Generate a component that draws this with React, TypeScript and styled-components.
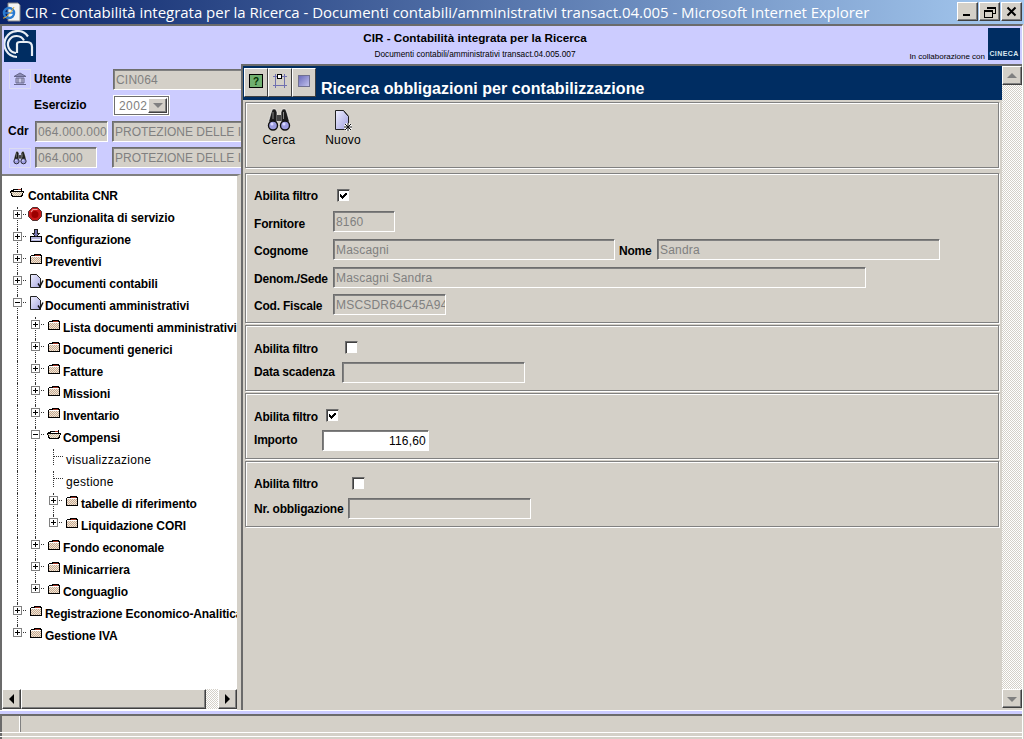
import React from "react";
import styled, { createGlobalStyle, css } from "styled-components";

const GlobalStyle = createGlobalStyle`
  html, body {
    margin: 0;
    padding: 0;
    background: #d4d0c8;
  }
  * {
    box-sizing: border-box;
  }
  body {
    font-family: "Liberation Sans", Arial, sans-serif;
    font-size: 12px;
    color: #000;
    overflow: hidden;
  }
`;

const raised = css`
  border-top: 1px solid #fff;
  border-left: 1px solid #fff;
  border-right: 1px solid #404040;
  border-bottom: 1px solid #404040;
  box-shadow: inset -1px -1px 0 #808080;
`;

const Frame = styled.div`
  width: 1024px;
  height: 739px;
  display: flex;
  flex-direction: column;
  background: #d4d0c8;
`;

const TitleBar = styled.div`
  height: 24px;
  flex: none;
  display: flex;
  align-items: center;
  padding: 0 2px 1px 2px;
  background: linear-gradient(90deg, #0a246a 0%, #a6caf0 100%);
`;

const TitleText = styled.div`
  margin-left: 4px;
  flex: 1;
  font-family: "Open Sans", sans-serif;
  font-size: 15px;
  letter-spacing: -0.03px;
  color: #fff;
  white-space: nowrap;
`;

const WinButton = styled.div`
  width: 21px;
  height: 19px;
  margin-left: 1px;
  display: flex;
  align-items: center;
  justify-content: center;
  background: #d4d0c8;
  ${raised}
`;

const Workspace = styled.div`
  flex: 1;
  display: flex;
  flex-direction: column;
  min-height: 0;
  border-top: 2px solid #6b6b6b;
  border-left: 2px solid #6b6b6b;
  margin-right: 1px;
  border-right: 1px solid #fff;
`;

const Banner = styled.div`
  height: 38px;
  flex: none;
  display: grid;
  grid-template-columns: 123px 700px 1fr;
  background: #ccccff;
`;

const BannerCenter = styled.div`
  text-align: center;
  padding-top: 4px;
`;

const BannerTitle = styled.div`
  font-size: 11.7px;
  font-weight: bold;
  line-height: 15px;
`;

const BannerSub = styled.div`
  font-size: 8.3px;
  line-height: 12px;
  margin-top: 3px;
`;

const BannerLogos = styled.div`
  display: flex;
  align-items: flex-start;
  justify-content: flex-end;
  gap: 3px;
  padding: 2px 2px 0 0;
  font-size: 8px;
  line-height: 10px;
  white-space: nowrap;
`;

const CollabText = styled.span`
  margin-top: 24px;
`;

const Columns = styled.div`
  flex: 1;
  min-height: 0;
  display: flex;
`;

const LeftColumn = styled.div`
  width: 239px;
  flex: none;
  display: flex;
  flex-direction: column;
  background: #ccccff;
  margin-top: -38px;
  position: relative;
`;

const LogoWrap = styled.div`
  height: 40px;
  padding: 4px 0 0 2px;
  flex: none;
`;

const UserPanel = styled.div`
  height: 108px;
  flex: none;
  overflow: hidden;
  display: flex;
  flex-direction: column;
`;

const UserRow = styled.div<{ $h: number }>`
  height: ${(p) => p.$h}px;
  display: flex;
  align-items: center;
  white-space: nowrap;
`;

const SmallIconBox = styled.div<{ $ml: number }>`
  width: 22px;
  height: 20px;
  margin-left: ${(p) => p.$ml}px;
  display: flex;
  align-items: center;
  justify-content: center;
  border: 1px solid #dcdcf0;
  flex: none;
`;

const BoldLabel = styled.div<{ $w?: number; $ml?: number }>`
  font-weight: bold;
  font-size: 12px;
  flex: none;
  white-space: nowrap;
  width: ${(p) => (p.$w ? `${p.$w}px` : "auto")};
  margin-left: ${(p) => p.$ml ?? 0}px;
`;

const FormLabel = styled(BoldLabel)<{ $pt?: number }>`
  letter-spacing: -0.2px;
  padding-top: ${(p) => p.$pt ?? 0}px;
`;

const Field = styled.div<{ $w: number; $ml?: number; $active?: boolean; $right?: boolean; $tight?: boolean }>`
  width: ${(p) => p.$w}px;
  height: 21px;
  flex: none;
  margin-left: ${(p) => p.$ml ?? 0}px;
  padding: 0 2px;
  line-height: 20px;
  font-size: 12px;
  letter-spacing: ${(p) => (p.$tight ? "0" : "0.2px")};
  overflow: hidden;
  white-space: nowrap;
  color: ${(p) => (p.$active ? "#000" : "#808080")};
  background: ${(p) => (p.$active ? "#fff" : "#d4d0c8")};
  text-align: ${(p) => (p.$right ? "right" : "left")};
  border-top: 1px solid #6e6e6e;
  border-left: 1px solid #6e6e6e;
  border-right: 1px solid #fff;
  border-bottom: 1px solid #fff;
  box-shadow: inset 1px 1px 0 #808080;
`;

const YearSelect = styled.div`
  width: 57px;
  height: 21px;
  flex: none;
  display: flex;
  background: #fff;
  border: 1px solid #fff;
  box-shadow: inset 1px 1px 0 #6e6e6e, inset -1px -1px 0 #6e6e6e;
  padding: 2px;
  color: #808080;
  letter-spacing: 0.4px;
  line-height: 16px;
  font-size: 12px;
`;

const YearText = styled.div`
  flex: 1;
  padding-left: 3px;
`;

const YearArrow = styled.div`
  width: 19px;
  display: flex;
  align-items: center;
  justify-content: center;
  background: #d4d0c8;
  ${raised}
`;

const TreePane = styled.div`
  flex: 1;
  min-height: 0;
  display: flex;
  flex-direction: column;
  background: #fff;
  border-top: 2px solid #808080;
  border-right: 4px solid #d4d0c8;
`;

const TreeScroll = styled.div`
  flex: 1;
  min-height: 0;
  overflow: hidden;
  padding-top: 9px;
`;

const TreeRowBox = styled.div`
  height: 22px;
  display: flex;
  white-space: nowrap;
  overflow: hidden;
  padding-left: 6px;
`;

const GuideCell = styled.div<{ $on: boolean }>`
  width: 18px;
  flex: none;
  position: relative;
  ${(p) =>
    p.$on &&
    css`
      &::before {
        content: "";
        position: absolute;
        left: 9px;
        top: 0;
        bottom: 0;
        border-left: 1px dotted #333;
      }
    `}
`;

const NodeCell = styled.div<{ $last?: boolean; $leaf?: boolean }>`
  width: 18px;
  flex: none;
  position: relative;
  &::before {
    content: "";
    position: absolute;
    left: 9px;
    top: 0;
    height: ${(p) => (p.$last ? "8px" : p.$leaf ? "16px" : "22px")};
    border-left: 1px dotted #333;
  }
  &::after {
    content: "";
    position: absolute;
    left: 10px;
    top: 7px;
    width: ${(p) => (p.$leaf ? "9px" : "8px")};
    border-top: 1px dotted #333;
  }
`;

const Expander = styled.div`
  position: absolute;
  left: 5px;
  top: 3px;
  width: 9px;
  height: 9px;
  background: #fff;
  border: 1px solid #808080;
  z-index: 1;
  &::before {
    content: "";
    position: absolute;
    left: 1px;
    top: 3px;
    width: 5px;
    height: 1px;
    background: #000;
  }
`;

const ExpanderPlus = styled(Expander)`
  &::after {
    content: "";
    position: absolute;
    left: 3px;
    top: 1px;
    width: 1px;
    height: 5px;
    background: #000;
  }
`;

const NodeIcon = styled.div<{ $w?: number; $top: number; $left: number }>`
  width: ${(p) => p.$w ?? 19}px;
  height: 22px;
  flex: none;
  padding: ${(p) => p.$top}px 0 0 ${(p) => p.$left}px;
  position: relative;
  z-index: 1;
  line-height: 0;
`;

const TreeLabel = styled.div<{ $plain?: boolean }>`
  font-size: 12px;
  line-height: 14px;
  padding-top: 4px;
  padding-left: ${(p) => (p.$plain ? "4px" : "0")};
  font-weight: ${(p) => (p.$plain ? "normal" : "bold")};
  letter-spacing: ${(p) => (p.$plain ? "0.3px" : "-0.1px")};
`;

const HScroll = styled.div`
  height: 20px;
  flex: none;
  display: flex;
  background: #d4d0c8;
  margin-bottom: 1px;
`;

const ScrollBtn = styled.div`
  width: 19px;
  flex: none;
  display: flex;
  align-items: center;
  justify-content: center;
  background: #d4d0c8;
  ${raised}
`;

const VScrollBtn = styled(ScrollBtn)`
  width: 20px;
  height: 19px;
`;

const HThumb = styled.div`
  flex: 1;
  background: #d4d0c8;
  ${raised}
`;

const ScrollTrack = styled.div<{ $w?: number; $flex?: boolean }>`
  ${(p) => (p.$w ? `width: ${p.$w}px;` : "")}
  ${(p) => (p.$flex ? "flex: 1;" : "")}
  background-color: #fff;
  background-image: repeating-conic-gradient(#d4d0c8 0 25%, #fff 0 50%);
  background-size: 2px 2px;
`;

const MainPane = styled.div`
  flex: 1;
  min-width: 0;
  display: flex;
  border-left: 2px solid #6b6b6b;
  border-top: 2px solid #6b6b6b;
`;

const MainBody = styled.div`
  flex: 1;
  min-width: 0;
  display: flex;
  flex-direction: column;
`;

const PaneHeader = styled.div`
  height: 34px;
  flex: none;
  background: #002d62;
  display: flex;
  align-items: flex-start;
  padding: 2px 0 0 1px;
`;

const ToolSquare = styled.div`
  width: 24px;
  height: 29px;
  flex: none;
  display: flex;
  align-items: center;
  justify-content: center;
  padding-bottom: 4px;
  background: #d4d0c8;
  ${raised}
  box-shadow: none;
`;

const PaneTitle = styled.div`
  margin-left: 5px;
  padding-top: 11px;
  font-size: 16px;
  line-height: 20px;
  font-weight: bold;
  letter-spacing: 0.06px;
  color: #fff;
  white-space: nowrap;
`;

const PanelStack = styled.div`
  flex: 1;
  min-height: 0;
  display: flex;
  flex-direction: column;
  gap: 2px;
  padding: 2px 3px 0 2px;
`;

const Panel = styled.div<{ $h: number; $mb?: number; $pt?: number }>`
  height: ${(p) => p.$h}px;
  margin-bottom: ${(p) => p.$mb ?? 0}px;
  padding-top: ${(p) => p.$pt ?? 0}px;
  flex: none;
  border: 1px solid #808080;
  box-shadow: inset 1px 1px 0 #fff, 1px 1px 0 #fff;
  padding-left: 8px;
  display: flex;
  flex-direction: column;
`;

const ToolsRow = styled.div`
  display: flex;
`;

const ToolItem = styled.div<{ $w: number }>`
  width: ${(p) => p.$w}px;
  display: flex;
  flex-direction: column;
  align-items: center;
  font-size: 12px;
  line-height: 14px;
  letter-spacing: 0.2px;
`;

const ToolIcon = styled.div<{ $dx?: number; $dy?: number }>`
  height: 25px;
  padding: ${(p) => p.$dy ?? 0}px 0 0 ${(p) => p.$dx ?? 0}px;
`;

const FormRow = styled.div<{ $h: number }>`
  height: ${(p) => p.$h}px;
  display: flex;
  align-items: center;
  flex: none;
`;

const CheckBox = styled.div<{ $ml: number }>`
  width: 13px;
  height: 13px;
  flex: none;
  margin-left: ${(p) => p.$ml}px;
  margin-top: -2px;
  display: flex;
  align-items: center;
  justify-content: center;
  background: #fff;
  border-top: 1px solid #6e6e6e;
  border-left: 1px solid #6e6e6e;
  border-right: 1px solid #d4d0c8;
  border-bottom: 1px solid #d4d0c8;
  box-shadow: inset 1px 1px 0 #404040;
`;

const VScroll = styled.div`
  width: 20px;
  flex: none;
  display: flex;
  flex-direction: column;
  margin-bottom: 2px;
`;

const BottomBar = styled.div`
  height: 29px;
  flex: none;
  display: flex;
  flex-direction: column;
  margin-left: -2px;
`;

const BottomStripe = styled.div`
  height: 4px;
  flex: none;
  background: #ccccff;
  border-top: 1px solid #fff;
`;

const StatusBar = styled.div`
  height: 18px;
  flex: none;
  display: flex;
  border-top: 2px solid #6b6b6b;
  border-left: 2px solid #6b6b6b;
`;

const StatusCell = styled.div`
  width: 18px;
  border-right: 1px solid #fff;
  box-shadow: 1px 0 0 #808080;
`;

const StatusEdge = styled.div`
  height: 1px;
  flex: none;
  background: #fff;
  margin-bottom: 3px;
`;

const CinecaBox = styled.div`
  width: 32px;
  height: 32px;
  background: #002d62;
  position: relative;
  flex: none;
`;

const CinecaWord = styled.div`
  position: absolute;
  left: 0;
  right: 0;
  top: 21px;
  font-size: 7px;
  line-height: 9px;
  font-weight: bold;
  letter-spacing: 0.4px;
  color: #d8e8f0;
  text-align: center;
`;

const Check = () => (
  <svg width="9" height="9" viewBox="0 0 9 9" shapeRendering="crispEdges">
    <path d="M1 3h1v1h1v1h1V4h1V3h1V2h2v2H7v1H6v1H5v1H4v1H3V7H2V6H1z" fill="#000" />
  </svg>
);

const BinocularIcon = ({ size = 24 }: { size?: number }) => (
  <svg width={size} height={size} viewBox="0 0 24 24">
    <path d="M5.5 1h3l1.500 3v10H1.500L4 5z" fill="#1c1c1c" stroke="#fff" strokeWidth="0.6" />
    <path d="M15.500 1h3l1.500 4 2.500 9H14V4z" fill="#1c1c1c" stroke="#fff" strokeWidth="0.6" />
    <rect x="10" y="7" width="4" height="6" fill="#444" />
    <path d="M6 4v7M16.500 4v7" stroke="#888" strokeWidth="1" />
    <circle cx="6" cy="17.500" r="4.500" fill="#9c9ce0" stroke="#111" strokeWidth="1.400" />
    <circle cx="18" cy="17.500" r="4.500" fill="#9c9ce0" stroke="#111" strokeWidth="1.400" />
    <circle cx="5" cy="16" r="1.500" fill="#d8d8ff" />
    <circle cx="17" cy="16" r="1.500" fill="#d8d8ff" />
  </svg>
);

const Dither = ({ id, a, b }: { id: string; a: string; b: string }) => (
  <pattern id={id} width="2" height="2" patternUnits="userSpaceOnUse">
    <rect width="2" height="2" fill={a} />
    <rect width="1" height="1" fill={b} />
    <rect x="1" y="1" width="1" height="1" fill={b} />
  </pattern>
);

const FolderClosed = () => (
  <svg width="12" height="10" viewBox="0 0 12 10" shapeRendering="crispEdges">
    <defs>
      <Dither id="folderFill" a="#c8a890" b="#f0e8d8" />
    </defs>
    <path d="M1 1h3V0h7v1h1v9H0V2h1z" fill="#000" />
    <path d="M5 1h5v1H5z" fill="#a03020" />
    <path d="M1 2h10v1H1z" fill="#fff" />
    <path d="M1 3h10v6H1z" fill="url(#folderFill)" />
  </svg>
);

const FolderOpen = () => (
  <svg width="14" height="9" viewBox="0 0 14 9" shapeRendering="crispEdges">
    <defs>
      <Dither id="openFill" a="#c8b8a0" b="#f0e8d8" />
    </defs>
    <path d="M1 2h2V1h8V0h1v3h2v1l-2 5H2L0 4V3h1z" fill="#000" />
    <path d="M4 2h7v1H4z" fill="#fff" />
    <path d="M1 4h12l-2 4H3z" fill="url(#openFill)" />
    <path d="M8 1h3v1H8z" fill="#a03020" />
  </svg>
);

const StopIcon = () => (
  <svg width="14" height="14" viewBox="0 0 14 14">
    <path d="M4.500.500h5l4 4v5l-4 4h-5l-4-4v-5z" fill="#c81818" stroke="#503030" strokeWidth="1" />
    <path d="M3 5l2-2.500h4.500" fill="none" stroke="#f0a0a0" strokeWidth="1.200" />
    <circle cx="7" cy="7.500" r="3.500" fill="#9c0000" />
  </svg>
);

const ConfigIcon = () => (
  <svg width="12" height="13" viewBox="0 0 12 13" shapeRendering="crispEdges">
    <path d="M0 7h12v6H0z" fill="#000" />
    <path d="M1 8h10v4H1z" fill="#b4b4dc" />
    <path d="M2 10h8v1H2z" fill="#f4f4ff" />
    <path d="M4 0h4v4h2v1H9v1H8v1H7v1H5V7H4V6H3V5H2V4h2z" fill="#222" />
    <path d="M5 1h2v4h1v1H7v1H5V6H4V5h1z" fill="#7878b4" />
  </svg>
);

const DocIcon = () => (
  <svg width="14" height="15" viewBox="0 0 14 15">
    <defs>
      <linearGradient id="docFill" x1="0" y1="0" x2="1" y2="1">
        <stop offset="0" stopColor="#f0f0ff" />
        <stop offset="1" stopColor="#a8a8e0" />
      </linearGradient>
    </defs>
    <path d="M.5.500h6l4 4v9H.5z" fill="url(#docFill)" stroke="#222" />
    <path d="M6.500.500l4 4" stroke="#222" />
    <path d="M8 9.500l2 3 3-6" fill="none" stroke="#111" strokeWidth="1.400" />
  </svg>
);

const NewDocIcon = () => (
  <svg width="20" height="22" viewBox="0 0 20 22">
    <defs>
      <linearGradient id="newDocFill" x1="0" y1="0" x2="1" y2="1">
        <stop offset="0" stopColor="#f0f0ff" />
        <stop offset="1" stopColor="#a0a0e0" />
      </linearGradient>
    </defs>
    <path d="M.5.500h8l5 6v13H.5z" fill="url(#newDocFill)" stroke="#222" />
    <path d="M8.500.500l5 6" stroke="#222" />
    <circle cx="13" cy="17" r="4" fill="#fff" />
    <path d="M13 13v8M9 17h8M10 14l6 6M16 14l-6 6" stroke="#111" strokeWidth="1" />
  </svg>
);

const HomeIcon = () => (
  <svg width="14" height="14" viewBox="0 0 14 14">
    <path d="M1 4.500L7 1l6 3.500z" fill="#8a8ab4" stroke="#66668c" />
    <path d="M3 6h8v5H3z" fill="#c8c8e6" stroke="#66668c" />
    <path d="M5 6v5M9 6v5M1 12.500h12" stroke="#66668c" />
  </svg>
);

const CnrLogo = () => (
  <svg width="32" height="32" viewBox="0 0 32 32">
    <rect width="32" height="32" fill="#002d62" />
    <path d="M24 6.500A13 13 0 1 0 13 27" fill="none" stroke="#e8eef4" strokeWidth="2.200" />
    <path d="M20 10.500A8.500 8.500 0 1 0 12 23" fill="none" stroke="#e8eef4" strokeWidth="2.200" />
    <path d="M13 23V14q0-2 3-2h7q5 0 5 5v9" fill="none" stroke="#e8eef4" strokeWidth="2.200" />
  </svg>
);

const Arrow = ({ dir, color = "#000" }: { dir: "l" | "r" | "u" | "d"; color?: string }) => {
  const paths = {
    l: "M6 0v10L1 5z",
    r: "M1 0v10l5-5z",
    u: "M0 7h10L5 2z",
    d: "M0 3h10L5 8z",
  };
  const flat = dir === "l" || dir === "r";
  return (
    <svg width={flat ? 7 : 10} height="10" viewBox={flat ? "0 0 7 10" : "0 0 10 10"}>
      <path d={paths[dir]} fill={color} />
    </svg>
  );
};

type IconKind = "stop" | "config" | "folder" | "doc" | "open";

type Node = {
  label: string;
  guides: boolean[];
  kind: "plus" | "minus" | "leaf";
  icon?: IconKind;
  last?: boolean;
};

const nodes: Node[] = [
  { label: "Funzionalita di servizio", guides: [], kind: "plus", icon: "stop" },
  { label: "Configurazione", guides: [], kind: "plus", icon: "config" },
  { label: "Preventivi", guides: [], kind: "plus", icon: "folder" },
  { label: "Documenti contabili", guides: [], kind: "plus", icon: "doc" },
  { label: "Documenti amministrativi", guides: [], kind: "minus", icon: "doc" },
  { label: "Lista documenti amministrativi", guides: [true], kind: "plus", icon: "folder" },
  { label: "Documenti generici", guides: [true], kind: "plus", icon: "folder" },
  { label: "Fatture", guides: [true], kind: "plus", icon: "folder" },
  { label: "Missioni", guides: [true], kind: "plus", icon: "folder" },
  { label: "Inventario", guides: [true], kind: "plus", icon: "folder" },
  { label: "Compensi", guides: [true], kind: "minus", icon: "open" },
  { label: "visualizzazione", guides: [true, true], kind: "leaf" },
  { label: "gestione", guides: [true, true], kind: "leaf" },
  { label: "tabelle di riferimento", guides: [true, true], kind: "plus", icon: "folder" },
  { label: "Liquidazione CORI", guides: [true, true], kind: "plus", icon: "folder", last: true },
  { label: "Fondo economale", guides: [true], kind: "plus", icon: "folder" },
  { label: "Minicarriera", guides: [true], kind: "plus", icon: "folder" },
  { label: "Conguaglio", guides: [true], kind: "plus", icon: "folder", last: true },
  { label: "Registrazione Economico-Analitica", guides: [], kind: "plus", icon: "folder" },
  { label: "Gestione IVA", guides: [], kind: "plus", icon: "folder", last: true },
];

const iconPlace: Record<IconKind, { top: number; left: number }> = {
  stop: { top: 0, left: 2 },
  config: { top: 0, left: 4 },
  folder: { top: 3, left: 4 },
  doc: { top: 1, left: 4 },
  open: { top: 3, left: 3 },
};

const renderIcon = (icon: IconKind) => {
  if (icon === "stop") return <StopIcon />;
  if (icon === "config") return <ConfigIcon />;
  if (icon === "doc") return <DocIcon />;
  if (icon === "open") return <FolderOpen />;
  return <FolderClosed />;
};

const TreeRow = ({ node }: { node: Node }) => (
  <TreeRowBox>
    {node.guides.map((on, i) => (
      <GuideCell key={i} $on={on} />
    ))}
    <NodeCell $last={node.last} $leaf={node.kind === "leaf"}>
      {node.kind === "plus" && <ExpanderPlus />}
      {node.kind === "minus" && <Expander />}
    </NodeCell>
    {node.icon && (
      <NodeIcon $top={iconPlace[node.icon].top} $left={iconPlace[node.icon].left}>
        {renderIcon(node.icon)}
      </NodeIcon>
    )}
    <TreeLabel $plain={node.kind === "leaf"}>{node.label}</TreeLabel>
  </TreeRowBox>
);

const App = () => (
  <Frame>
    <GlobalStyle />
    <TitleBar>
      <svg width="19" height="20" viewBox="0 0 19 20">
        <path d="M6 1h10l2 2v16H6z" fill="#f4f4f4" stroke="#888" />
        <circle cx="7" cy="11" r="5" fill="none" stroke="#2a7ad0" strokeWidth="2.500" />
        <path d="M2 11h10" stroke="#2a7ad0" strokeWidth="1.500" />
        <path d="M1 16c2 1 8-5 11-11" fill="none" stroke="#e8b030" strokeWidth="1" />
      </svg>
      <TitleText>CIR - Contabilità integrata per la Ricerca - Documenti contabili/amministrativi transact.04.005 - Microsoft Internet Explorer</TitleText>
      <WinButton>
        <svg width="11" height="11" viewBox="0 0 11 11" shapeRendering="crispEdges">
          <rect x="1" y="8" width="7" height="2" fill="#000" />
        </svg>
      </WinButton>
      <WinButton>
        <svg width="12" height="12" viewBox="0 0 12 12" shapeRendering="crispEdges">
          <path d="M3.500 3V1h7.500v6H9" fill="none" stroke="#000" />
          <path d="M3.500 1.500H11" stroke="#000" strokeWidth="2" />
          <rect x="0.500" y="4.500" width="8" height="7" fill="none" stroke="#000" />
          <path d="M0.500 5H8.500" stroke="#000" strokeWidth="2" />
        </svg>
      </WinButton>
      <WinButton>
        <svg width="11" height="11" viewBox="0 0 11 11">
          <path d="M1.500 1.500l8 8M9.500 1.500l-8 8" stroke="#000" strokeWidth="2" />
        </svg>
      </WinButton>
    </TitleBar>
    <Workspace>
      <Banner>
        <div />
        <BannerCenter>
          <BannerTitle>CIR - Contabilità integrata per la Ricerca</BannerTitle>
          <BannerSub>Documenti contabili/amministrativi transact.04.005.007</BannerSub>
        </BannerCenter>
        <BannerLogos>
          <CollabText>In collaborazione con</CollabText>
          <CinecaBox>
            <CinecaWord>CINECA</CinecaWord>
          </CinecaBox>
        </BannerLogos>
      </Banner>
      <Columns>
        <LeftColumn>
          <LogoWrap>
            <CnrLogo />
          </LogoWrap>
          <UserPanel>
            <UserRow $h={26}>
              <SmallIconBox $ml={7}>
                <HomeIcon />
              </SmallIconBox>
              <BoldLabel $w={79} $ml={3}>Utente</BoldLabel>
              <Field $w={130}>CIN064</Field>
            </UserRow>
            <UserRow $h={26}>
              <BoldLabel $w={79} $ml={32}>Esercizio</BoldLabel>
              <YearSelect>
                <YearText>2002</YearText>
                <YearArrow>
                  <Arrow dir="d" color="#808080" />
                </YearArrow>
              </YearSelect>
            </UserRow>
            <UserRow $h={26}>
              <BoldLabel $w={27} $ml={6}>Cdr</BoldLabel>
              <Field $w={73}>064.000.000</Field>
              <Field $w={130} $ml={4} $tight>PROTEZIONE DELLE I</Field>
            </UserRow>
            <UserRow $h={27}>
              <SmallIconBox $ml={7}>
                <BinocularIcon size={14} />
              </SmallIconBox>
              <Field $w={62} $ml={4}>064.000</Field>
              <Field $w={130} $ml={15} $tight>PROTEZIONE DELLE I</Field>
            </UserRow>
          </UserPanel>
          <TreePane>
            <TreeScroll>
              <TreeRowBox>
                <NodeIcon $w={20} $top={3} $left={2}>
                  <FolderOpen />
                </NodeIcon>
                <TreeLabel>Contabilita CNR</TreeLabel>
              </TreeRowBox>
              {nodes.map((n) => (
                <TreeRow key={n.label} node={n} />
              ))}
            </TreeScroll>
            <HScroll>
              <ScrollBtn>
                <Arrow dir="l" />
              </ScrollBtn>
              <HThumb />
              <ScrollTrack $w={12} />
              <ScrollBtn>
                <Arrow dir="r" />
              </ScrollBtn>
            </HScroll>
          </TreePane>
        </LeftColumn>
        <MainPane>
          <MainBody>
            <PaneHeader>
              <ToolSquare>
                <svg width="14" height="14" viewBox="0 0 14 14">
                  <rect x="0.500" y="0.500" width="13" height="13" fill="#70b070" stroke="#000" />
                  <text x="4" y="11" fontSize="10" fontWeight="bold" fontFamily="Liberation Sans" fill="#003000">?</text>
                </svg>
              </ToolSquare>
              <ToolSquare>
                <svg width="14" height="14" viewBox="0 0 14 14" shapeRendering="crispEdges">
                  <path d="M2.500 0v14M11.500 0v14M0 2.500h14M0 11.500h14" stroke="#7070b0" />
                  <rect x="4.500" y="0.500" width="4" height="4" fill="#fff" stroke="#000" />
                </svg>
              </ToolSquare>
              <ToolSquare>
                <svg width="12" height="12" viewBox="0 0 12 12">
                  <defs>
                    <linearGradient id="blueSquare" x1="0" y1="0" x2="1" y2="1">
                      <stop offset="0" stopColor="#6868b8" />
                      <stop offset="1" stopColor="#c4c4ee" />
                    </linearGradient>
                  </defs>
                  <rect x="0.500" y="0.500" width="11" height="11" fill="url(#blueSquare)" stroke="#707090" />
                </svg>
              </ToolSquare>
              <PaneTitle>Ricerca obbligazioni per contabilizzazione</PaneTitle>
            </PaneHeader>
            <PanelStack>
              <Panel $h={66} $mb={3} $pt={5}>
                <ToolsRow>
                  <ToolItem $w={50}>
                    <ToolIcon>
                      <BinocularIcon />
                    </ToolIcon>
                    Cerca
                  </ToolItem>
                  <ToolItem $w={78}>
                    <ToolIcon $dx={3} $dy={2}>
                      <NewDocIcon />
                    </ToolIcon>
                    Nuovo
                  </ToolItem>
                </ToolsRow>
              </Panel>
              <Panel $h={150} $pt={11}>
                <FormRow $h={22}>
                  <FormLabel $w={76}>Abilita filtro</FormLabel>
                  <CheckBox $ml={7}>
                    <Check />
                  </CheckBox>
                </FormRow>
                <FormRow $h={28}>
                  <FormLabel $w={79} $pt={6}>Fornitore</FormLabel>
                  <Field $w={62}>8160</Field>
                </FormRow>
                <FormRow $h={28}>
                  <FormLabel $w={79} $pt={4}>Cognome</FormLabel>
                  <Field $w={282}>Mascagni</Field>
                  <FormLabel $w={38} $ml={4} $pt={4}>Nome</FormLabel>
                  <Field $w={283}>Sandra</Field>
                </FormRow>
                <FormRow $h={28}>
                  <FormLabel $w={79} $pt={4}>Denom./Sede</FormLabel>
                  <Field $w={533}>Mascagni Sandra</Field>
                </FormRow>
                <FormRow $h={26}>
                  <FormLabel $w={79} $pt={4}>Cod. Fiscale</FormLabel>
                  <Field $w={113}>MSCSDR64C45A94</Field>
                </FormRow>
              </Panel>
              <Panel $h={66} $pt={11}>
                <FormRow $h={22}>
                  <FormLabel $w={76} $pt={2}>Abilita filtro</FormLabel>
                  <CheckBox $ml={15} />
                </FormRow>
                <FormRow $h={26}>
                  <FormLabel $w={88}>Data scadenza</FormLabel>
                  <Field $w={183}>&nbsp;</Field>
                </FormRow>
              </Panel>
              <Panel $h={66} $pt={11}>
                <FormRow $h={22}>
                  <FormLabel $w={72} $pt={2}>Abilita filtro</FormLabel>
                  <CheckBox $ml={0}>
                    <Check />
                  </CheckBox>
                </FormRow>
                <FormRow $h={26}>
                  <FormLabel $w={68}>Importo</FormLabel>
                  <Field $w={107} $active $right>116,60</Field>
                </FormRow>
              </Panel>
              <Panel $h={66} $pt={11}>
                <FormRow $h={22}>
                  <FormLabel $w={76}>Abilita filtro</FormLabel>
                  <CheckBox $ml={22} />
                </FormRow>
                <FormRow $h={26}>
                  <FormLabel $w={94} $pt={2}>Nr. obbligazione</FormLabel>
                  <Field $w={183}>&nbsp;</Field>
                </FormRow>
              </Panel>
            </PanelStack>
          </MainBody>
          <VScroll>
            <VScrollBtn>
              <Arrow dir="u" color="#808080" />
            </VScrollBtn>
            <ScrollTrack $flex />
            <VScrollBtn>
              <Arrow dir="d" color="#808080" />
            </VScrollBtn>
          </VScroll>
        </MainPane>
      </Columns>
      <BottomBar>
        <BottomStripe />
        <StatusBar>
          <StatusCell />
        </StatusBar>
        <StatusEdge />
        <StatusEdge />
      </BottomBar>
    </Workspace>
  </Frame>
);

export default App;
